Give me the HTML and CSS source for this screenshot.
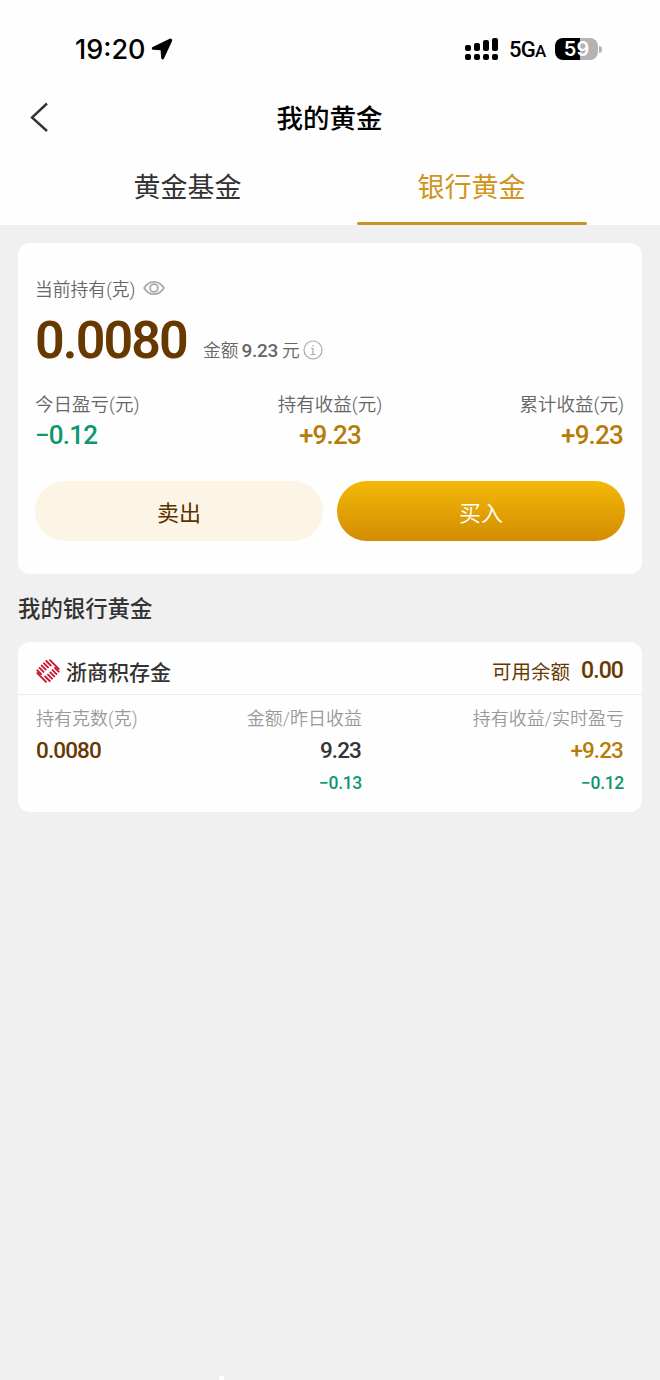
FILE: index.html
```html
<!DOCTYPE html>
<html lang="zh-CN">
<head>
<meta charset="utf-8">
<title>我的黄金</title>
<link rel="stylesheet" href="styles.css">
</head>
<body>
<div class="screen">
  <header class="header">
    <div class="status">
      <div class="clock"><span class="time">19:20</span>
        <svg class="location" width="22" height="22" viewBox="0 0 22 22"><path d="M19 1.500 2 9.700c-.8.400-.6 1.300.3 1.400l8 .5.6 8.200c.1 1 1 1.200 1.400.3L20.400 2.800c.4-.9-.5-1.700-1.400-1.300z"/></svg>
      </div>
      <div class="signals">
        <svg class="bars" width="34" height="24" viewBox="0 0 34 24"><rect x="0" y="8" width="6" height="6" rx="2"/><rect x="9" y="6" width="6" height="8" rx="2"/><rect x="18" y="3" width="6" height="11" rx="2"/><rect x="27" y="1" width="6" height="13" rx="2"/><rect x="0" y="17" width="6" height="6" rx="2"/><rect x="9" y="17" width="6" height="6" rx="2"/><rect x="18" y="17" width="6" height="6" rx="2"/><rect x="27" y="17" width="6" height="6" rx="2"/></svg>
        <span class="network">5G<small>A</small></span>
        <div class="battery"><span class="level">59</span></div><i class="cap"></i>
      </div>
    </div>
    <div class="nav">
      <svg class="back" width="20" height="32" viewBox="0 0 20 32"><path d="M17 2.500 2 16.500l15 13.500"/></svg>
      <h1 class="title">我的黄金</h1>
    </div>
    <nav class="tabs">
      <div class="tab"><span>黄金基金</span></div>
      <div class="tab active"><span>银行黄金</span></div>
    </nav>
  </header>
  <main>
    <section class="card summary">
      <div class="label holding">当前持有(克)
        <svg class="eye" width="22" height="16" viewBox="0 0 22 16"><path d="M1.200 8C3.500 4 7 1.800 11 1.800S18.500 4 20.800 8C18.500 12 15 14.200 11 14.200S3.500 12 1.200 8z"/><circle cx="11" cy="8" r="3.900"/></svg>
      </div>
      <div class="total">
        <span class="grams">0.0080</span>
        <span class="amount">金额<b>9.23</b>元</span>
        <svg class="info" width="20" height="20" viewBox="0 0 20 20"><circle cx="10" cy="10" r="9"/><path d="M10 5v1.500M8 8.500h2v6M7.500 14.500h5"/></svg>
      </div>
      <div class="stats">
        <div class="stat"><span class="label">今日盈亏(元)</span><b class="loss">−0.12</b></div>
        <div class="stat center"><span class="label">持有收益(元)</span><b class="gain">+9.23</b></div>
        <div class="stat right"><span class="label">累计收益(元)</span><b class="gain">+9.23</b></div>
      </div>
      <div class="actions">
        <button class="btn sell">卖出</button>
        <button class="btn buy">买入</button>
      </div>
    </section>
    <h2 class="section-title">我的银行黄金</h2>
    <section class="card account">
      <div class="account-head">
        <svg class="logo" width="24" height="24" viewBox="0 0 24 24"><path d="M1.300 11.300l3.700 3.700M3.500 8.900l4 4M5.700 6.600l4 4M8 4.300l4 4M10.300 2l4.500 4.500M14 1.200l8.700 8.700M22.700 12.700l-3.700-3.700M20.500 15.100l-4-4M18.300 17.400l-4-4M16 19.700l-4-4M13.700 22l-4.500-4.500M10 22.800l-8.700-8.700"/></svg>
        <span class="product">浙商积存金</span>
        <span class="available">可用余额</span><b class="balance">0.00</b>
      </div>
      <div class="account-body">
        <div class="col"><span class="caption">持有克数(克)</span><b class="value brown">0.0080</b></div>
        <div class="col right"><span class="caption">金额/昨日收益</span><b class="value">9.23</b><b class="change">−0.13</b></div>
        <div class="col right"><span class="caption">持有收益/实时盈亏</span><b class="value gold">+9.23</b><b class="change">−0.12</b></div>
      </div>
    </section>
  </main>
</div>
</body>
</html>
```

FILE: styles.css
```css
* { box-sizing: border-box; }
body { margin: 0; background: #f0f0f0; color: #333; font-family: Roboto, "Noto Sans CJK SC", sans-serif; }
.screen { position: relative; width: 660px; height: 1380px; overflow: hidden; }
.screen::after { content: ""; position: absolute; left: 219px; bottom: 0; width: 5px; height: 4px; background: #fff; }
svg { display: block; flex: none; }
.header { height: 225px; background: #fefefe; }
.status { height: 84px; padding: 24px 58px 0 75px; display: flex; justify-content: space-between; color: #000; }
.clock, .signals { height: 50px; display: flex; align-items: center; }
.time { font: 500 27px/50px Inter, sans-serif; padding-top: 1px; }
.location { margin-left: 6px; stroke: #000; stroke-width: 1.500; stroke-linejoin: round; }
.bars { margin-right: 10px; }
.network { width: 36px; margin-right: 10px; font: 500 22px/50px Roboto, sans-serif; white-space: nowrap; letter-spacing: -0.8px; padding-top: 2px; }
.network small { font-size: 17px; }
.battery { width: 43px; height: 22px; border-radius: 8px; background: linear-gradient(90deg, #000 58%, #b3b3b3 58%); text-align: center; }
.level { display: block; color: #fff; font: 600 20px/22px Inter, sans-serif; }
.cap { width: 3px; height: 7px; margin-left: 1px; background: #b3b3b3; border-radius: 0 3px 3px 0; }
.nav { height: 66px; padding: 0 31px 0 30px; display: grid; grid-template-columns: 20px 1fr 20px; align-items: center; }
.back path { fill: none; stroke: #333; stroke-width: 2.400; }
.title { margin: 0; padding-top: 3px; text-align: center; color: #000; font-size: 26.500px; line-height: 63px; font-weight: 500; }
.tabs { height: 75px; padding: 0 46px; display: flex; }
.tab { flex: 1; display: flex; flex-direction: column; align-items: center; font-size: 27px; line-height: 68px; }
.tab span { padding: 4px 1px 0 0; }
.active { color: #d0951d; }
.active::after { content: ""; width: 230px; height: 3px; border-radius: 2px; background: #c99427; }
main { padding: 18px; }
.card { background: #fefefe; border-radius: 12px; }
.summary { height: 331px; padding: 32px 17px 0; }
.label { font-size: 18.500px; line-height: 28px; padding-top: 1px; color: #666; font-weight: 350; }
.holding { height: 28px; display: flex; align-items: center; font-size: 17.800px; gap: 7.500px; }
.eye { margin-top: -3px; fill: none; stroke: #aaa; stroke-width: 1.800; }
.total { height: 76px; display: flex; align-items: center; }
.grams { font-size: 52px; line-height: 76px; font-weight: 600; color: #673901; width: 168px; letter-spacing: -1.900px; }
.amount { font-size: 17.800px; line-height: 28px; padding-top: 19px; color: #666; font-weight: 350; }
.amount b { font-size: 19px; font-weight: 500; margin: 0 4px 0 3px; letter-spacing: -0.3px; }
.info { margin: 18px 0 0 3px; fill: none; stroke: #aaa; stroke-width: 1.200; }
.stats { height: 102px; padding-top: 11px; display: grid; grid-template-columns: 1fr 1fr 1fr; }
.stat { display: flex; flex-direction: column; }
.stat b { font-size: 26px; line-height: 33px; font-weight: 500; letter-spacing: -0.8px; }
.center { align-items: center; }
.right { align-items: flex-end; }
.stat.right { padding-right: 1px; }
.stat.right b { padding-right: 1px; }
.loss { color: #0d9870; }
.gain, .gold { color: #b77c08; }
.actions { display: grid; grid-template-columns: 1fr 1fr; gap: 14px; }
.btn { height: 60px; border: 0; border-radius: 30px; padding: 0; font: 350 22px/58px "Noto Sans CJK SC", sans-serif; }
.sell { background: #fcf4e5; color: #5a3200; font-weight: 400; }
.buy { background: linear-gradient(#f3b907, #d38c02); color: #fff; }
.section-title { margin: 0; padding-top: 2px; height: 68px; font-size: 22.400px; line-height: 67px; font-weight: 500; }
.account { height: 170px; }
.account-head { height: 53px; padding: 4px 18px 0; border-bottom: 1px solid #eaeaea; display: flex; align-items: center; }
.logo { margin-top: 2px; fill: none; stroke: #cf1531; stroke-width: 1.900; stroke-linecap: round; }
.product { margin: 1px auto 0 6px; font-size: 21px; font-weight: 500; }
.available { font-size: 19.500px; color: #673901; }
.balance { margin-left: 11px; font-size: 23px; font-weight: 500; color: #673901; letter-spacing: -0.9px; padding: 1px 1px 0 0; }
.account-body { padding: 9px 18px 0; display: grid; grid-template-columns: 118px 208px 1fr; }
.col { display: flex; flex-direction: column; }
.caption { font-size: 18px; line-height: 28px; height: 28px; padding-top: 1px; font-weight: 350; color: #999; }
.value { font-size: 22.500px; line-height: 36px; font-weight: 500; letter-spacing: -0.9px; padding-right: 1px; }
.brown { color: #673901; }
.change { font-size: 17.500px; line-height: 30px; font-weight: 500; color: #0d9870; letter-spacing: -0.3px; }
```
